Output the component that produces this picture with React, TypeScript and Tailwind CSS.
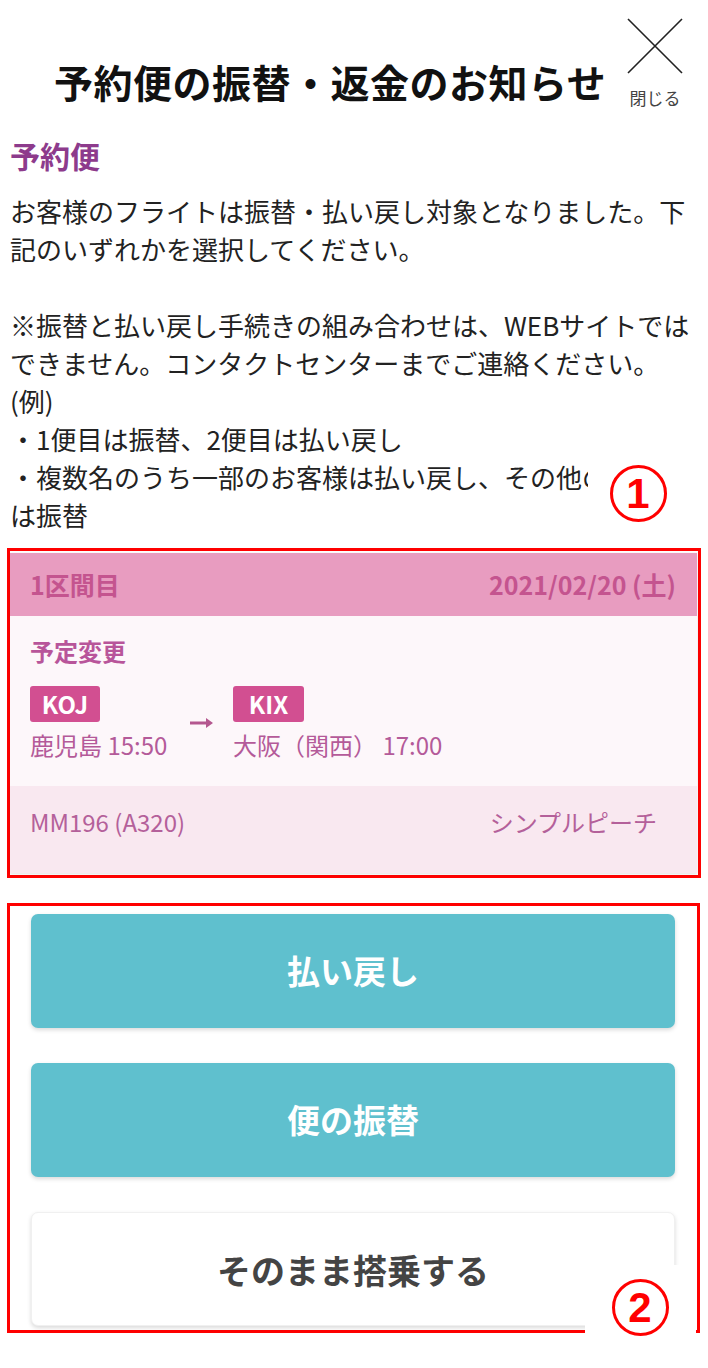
import React from "react";

function Marker({ n, className }: { n: string; className: string }) {
  return (
    <div className={"absolute bg-white flex " + className}>
      <div className="w-[57px] h-[57px] rounded-full border-[3px] border-[#f00] flex items-center justify-center">
        <span className="text-[#f00] text-[42px] leading-none font-black font-['Liberation_Sans',sans-serif]">{n}</span>
      </div>
    </div>
  );
}

export default function App() {
  return (
    <div className="relative w-[708px] h-[1368px] bg-white overflow-hidden font-['Noto_Sans_CJK_JP',sans-serif] text-[#222]">
      {/* header */}
      <div className="h-[137px] flex justify-between items-start">
        <h1 className="mt-[56px] ml-[54px] text-[39px] leading-[50px] font-bold text-[#111] tracking-[0.5px]">
          予約便の振替・返金のお知らせ
        </h1>
        <button className="mt-[17px] mr-[24px] flex flex-col items-center">
          <svg width="58" height="58" viewBox="0 0 58 58">
            <path d="M2 2 L56 56 M56 2 L2 56" stroke="#222" strokeWidth="1.6" fill="none" />
          </svg>
          <span className="mt-[12px] text-[17px] leading-[22px] text-[#444]">閉じる</span>
        </button>
      </div>

      <div className="px-[10px]">
        <h2 className="text-[30px] leading-[36px] font-bold text-[#8d3b8c]">予約便</h2>
        <div className="mt-[19px] text-[26px] leading-[38px]">
          <p>お客様のフライトは振替・払い戻し対象となりました。下記のいずれかを選択してください。</p>
          <p className="mt-[38px]">
            ※振替と払い戻し手続きの組み合わせは、WEBサイトではできません。コンタクトセンターまでご連絡ください。
          </p>
          <p>(例)</p>
          <p>・1便目は振替、2便目は払い戻し</p>
          <p>・複数名のうち一部のお客様は払い戻し、その他のお客様は振替</p>
        </div>
      </div>

      {/* flight card */}
      <div className="mt-[14px] mx-[7px] border-[3px] border-[#f00] pt-[2px] pb-[2px]">
        <div className="bg-[#fdf7fa] shadow-[0_1px_3px_rgba(0,0,0,0.12)] mr-[1px]">
          <div className="h-[63px] bg-[#e89cc0] flex items-center justify-between pl-[20px] pr-[21px] text-[25px] font-bold text-[#c4548f]">
            <span>1区間目</span>
            <span>2021/02/20 (土)</span>
          </div>
          <div className="pt-[22px] pb-[26px] pl-[20px]">
            <div className="text-[24px] leading-[26px] font-bold text-[#b8559a]">予定変更</div>
            <div className="mt-[22px] flex items-center">
              <div className="w-[160px]">
                <span className="inline-block h-[36px] w-[70px] rounded-[3px] bg-[#d24f91] text-white text-[24px] leading-[36px] font-bold text-center">KOJ</span>
                <div className="mt-[8px] text-[24px] leading-[30px] text-[#b45a99] whitespace-nowrap">鹿児島 15:50</div>
              </div>
              <div className="w-[43px]">
                <svg width="24" height="12" viewBox="0 0 24 12">
                  <path d="M0 6 H20" stroke="#b4578f" strokeWidth="3" />
                  <path d="M16 1 L23 6 L16 11 Z" fill="#b4578f" />
                </svg>
              </div>
              <div>
                <span className="inline-block h-[36px] w-[71px] rounded-[3px] bg-[#d24f91] text-white text-[24px] leading-[36px] font-bold text-center">KIX</span>
                <div className="mt-[8px] text-[24px] leading-[30px] text-[#b45a99]">大阪（関西） 17:00</div>
              </div>
            </div>
          </div>
          <div className="h-[87px] bg-[#f9e8f0] flex items-start justify-between pt-[21px] pl-[20px] pr-[40px] text-[24px] leading-[30px] text-[#b4609a]">
            <span>MM196 (A320)</span>
            <span>シンプルピーチ</span>
          </div>
        </div>
      </div>

      {/* actions */}
      <div className="mt-[25px] mx-[7px] mr-[8px] border-[3px] border-[#f00] pt-[8px] pb-[4px] pl-[21px] pr-[22px] flex flex-col gap-[35px]">
        <button className="h-[114px] rounded-[7px] bg-[#5fc0ce] shadow-[0_2px_4px_rgba(0,0,0,0.15)] text-white text-[33px] font-bold">
          払い戻し
        </button>
        <button className="h-[114px] rounded-[7px] bg-[#5fc0ce] shadow-[0_2px_4px_rgba(0,0,0,0.15)] text-white text-[33px] font-bold">
          便の振替
        </button>
        <button className="h-[114px] rounded-[7px] bg-white border border-[#f0f0f0] shadow-[0_2px_4px_rgba(0,0,0,0.15)] text-[#444] text-[34px] font-bold">
          そのまま搭乗する
        </button>
      </div>

      <Marker n="1" className="left-[588px] top-[462px] w-[108px] h-[83px] items-start justify-center pt-[3px] pr-[8px]" />
      <Marker n="2" className="left-[585px] top-[1265px] w-[111px] h-[103px] items-start justify-center pt-[14px] pr-[1px]" />
    </div>
  );
}
